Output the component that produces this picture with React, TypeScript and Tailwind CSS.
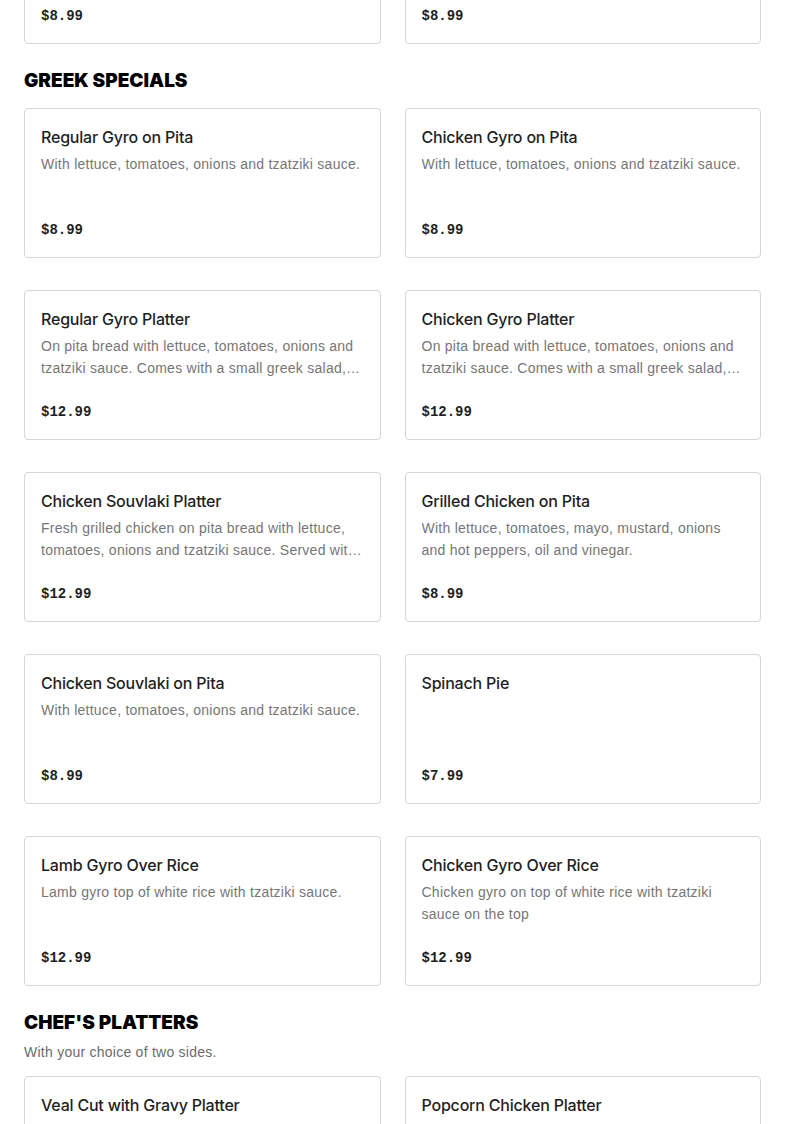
type Item = { name: string; desc?: string; price: string }

const greek: Item[] = [
  { name: 'Regular Gyro on Pita', desc: 'With lettuce, tomatoes, onions and tzatziki sauce.', price: '$8.99' },
  { name: 'Chicken Gyro on Pita', desc: 'With lettuce, tomatoes, onions and tzatziki sauce.', price: '$8.99' },
  {
    name: 'Regular Gyro Platter',
    desc: 'On pita bread with lettuce, tomatoes, onions and tzatziki sauce. Comes with a small greek salad, and fries.',
    price: '$12.99',
  },
  {
    name: 'Chicken Gyro Platter',
    desc: 'On pita bread with lettuce, tomatoes, onions and tzatziki sauce. Comes with a small greek salad, and fries.',
    price: '$12.99',
  },
  {
    name: 'Chicken Souvlaki Platter',
    desc: 'Fresh grilled chicken on pita bread with lettuce, tomatoes, onions and tzatziki sauce. Served with a small greek salad.',
    price: '$12.99',
  },
  {
    name: 'Grilled Chicken on Pita',
    desc: 'With lettuce, tomatoes, mayo, mustard, onions and hot peppers, oil and vinegar.',
    price: '$8.99',
  },
  { name: 'Chicken Souvlaki on Pita', desc: 'With lettuce, tomatoes, onions and tzatziki sauce.', price: '$8.99' },
  { name: 'Spinach Pie', price: '$7.99' },
  { name: 'Lamb Gyro Over Rice', desc: 'Lamb gyro top of white rice with tzatziki sauce.', price: '$12.99' },
  { name: 'Chicken Gyro Over Rice', desc: 'Chicken gyro on top of white rice with tzatziki sauce on the top', price: '$12.99' },
]

const chefs: Item[] = [
  { name: 'Veal Cut with Gravy Platter', price: '$14.99' },
  { name: 'Popcorn Chicken Platter', price: '$13.99' },
]

const previous: Item[] = [
  { name: 'Chicken Cheese Steak', price: '$8.99' },
  { name: 'Philly Cheese Steak', price: '$8.99' },
]

function Card({ item }: { item: Item }) {
  return (
    <div className="flex h-[150px] flex-col rounded-[4px] border border-[#d6d6d6] bg-white px-4 pt-4 pb-[17px]">
      <div className="font-['Inter',sans-serif] text-[16px] leading-6 font-medium tracking-[-0.2px] text-[#1f1f1f]">
        {item.name}
      </div>
      <div className="mt-[4px] line-clamp-2 font-['Liberation_Sans',sans-serif] text-[14px] leading-[22px] tracking-[0.25px] text-[#767676]">
        {item.desc}
      </div>
      <div className="mt-auto font-['Liberation_Mono',monospace] text-[14px] leading-5 font-bold text-[#1f1f1f]">
        {item.price}
      </div>
    </div>
  )
}

function Grid({ items }: { items: Item[] }) {
  return (
    <div className="grid grid-cols-2 gap-x-6 gap-y-8">
      {items.map(it => (
        <Card key={it.name} item={it} />
      ))}
    </div>
  )
}

function Section({ title, note, items }: { title: string; note?: string; items: Item[] }) {
  return (
    <section className="pt-[23px]">
      <div className="mb-[13px]">
        <h2 className="font-['Inter',sans-serif] text-[19px] leading-7 font-black text-black uppercase">{title}</h2>
        {note && (
          <p className="mt-[4px] font-['Liberation_Sans',sans-serif] text-[14px] leading-[22px] tracking-[0.25px] text-[#6b6b6b]">
            {note}
          </p>
        )}
      </div>
      <Grid items={items} />
    </section>
  )
}

export default function App() {
  return (
    <div className="h-[1124px] overflow-hidden bg-white px-6">
      <div className="-mt-[106px]">
        <Grid items={previous} />
      </div>
      <Section title="Greek Specials" items={greek} />
      <Section title="Chef's Platters" note="With your choice of two sides." items={chefs} />
    </div>
  )
}
